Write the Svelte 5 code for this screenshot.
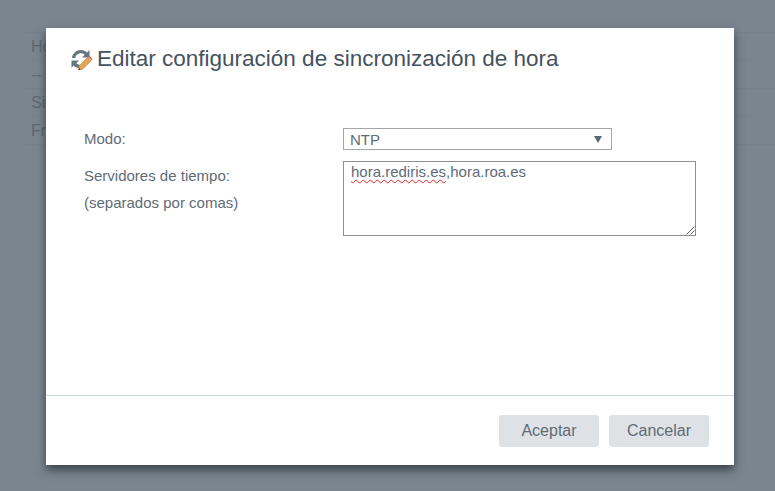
<script>
  const rows = ['Hora', '--', 'Sincronización', 'Fr'];
</script>

<div class="page">
  <div class="table">
    {#each rows as r}
      <div class="row">{r}</div>
    {/each}
  </div>
  <div class="overlay">
    <div class="modal">
      <header class="head">
        <svg class="icon" viewBox="0 0 24 24" width="24" height="24" aria-hidden="true">
          <path d="M3 11C3.600 6.500 7.500 3 12 3c2.400 0 4.500.9 6 2.400L20.500 3v7.500H13l2.700-2.700C14.700 6.900 13.400 6.300 12 6.300 9 6.300 6.700 8.300 6.200 11Z" fill="#66757f"/>
          <path d="M2.500 13.500H10l-2.700 2.700c1 .9 2.200 1.500 3.600 1.500l-.8 3.200c-2.300-.1-4.300-1-5.700-2.400L2.500 21Z" fill="#66757f"/>
          <path d="M9.500 23l1-4.400 8.300-8.300 3.400 3.400-8.300 8.300Z" fill="#e3a455" stroke="#b07a35" stroke-width=".5"/>
          <path d="M19 9.800l1.200-1.200 3.300 3.300-1.100 1.300Z" fill="#ec5c5c"/>
          <path d="M9.500 23l.5-2.200 1.700 1.700Z" fill="#4a3a2a"/>
        </svg>
        <h1>Editar configuración de sincronización de hora</h1>
      </header>
      <div class="body">
        <div class="field">
          <label class="lab" for="modo">Modo:</label>
          <div class="select" id="modo">
            <span>NTP</span>
            <svg class="caret" viewBox="0 0 8 7" width="8" height="7" aria-hidden="true"><path d="M0 0h8L4 7Z" fill="#5a6672"/></svg>
          </div>
        </div>
        <div class="field">
          <label class="lab two" for="srv">Servidores de tiempo:<br />(separados por comas)</label>
          <div class="area" id="srv">
            <span class="txt"><span class="sq">hora.rediris.es</span>,hora.roa.es</span>
            <svg class="grip" viewBox="0 0 10 10" width="10" height="10" aria-hidden="true">
              <path d="M1.500 9.500L9.500 1.500M5.500 9.500L9.500 5.500" stroke="#666" stroke-width="1" fill="none"/>
            </svg>
          </div>
        </div>
      </div>
      <footer class="foot">
        <button type="button">Aceptar</button>
        <button type="button">Cancelar</button>
      </footer>
    </div>
  </div>
</div>

<style>
  :global(body) { margin: 0; background: #7a8590; }
  .page {
    position: relative;
    width: 775px;
    height: 491px;
    overflow: hidden;
    background: #7a8590;
    font-family: "Liberation Sans", Arial, sans-serif;
    padding: 32px 0 0 23px;
    box-sizing: border-box;
  }
  .table { border-top: 1px solid #76818c; }
  .row {
    height: 27px;
    line-height: 27px;
    border-bottom: 1px solid #76818c;
    padding-left: 8px;
    font-size: 16px;
    color: #5d6873;
    background: #7a8590;
  }
  .overlay {
    position: absolute;
    inset: 0;
    padding: 28px 41px 26px 46px;
    box-sizing: border-box;
    display: flex;
  }
  .modal {
    flex: 1;
    min-width: 0;
    background: #fff;
    display: flex;
    flex-direction: column;
    box-shadow: 0 5px 9px rgba(30, 38, 46, .7);
  }
  .head {
    display: flex;
    align-items: center;
    gap: 4px;
    padding: 16px 24px 0 23px;
    height: 30px;
  }
  .icon { flex: none; width: 24px; height: 24px; }
  h1 {
    margin: 0;
    font-size: 22.5px;
    font-weight: 400;
    line-height: 30px;
    color: #46525e;
    white-space: nowrap;
  }
  .body {
    flex: 1;
    padding: 54px 38px 0 38px;
    display: flex;
    flex-direction: column;
    gap: 11px;
  }
  .field { display: flex; align-items: flex-start; }
  .lab {
    width: 259px;
    flex: none;
    font-size: 15px;
    line-height: 22px;
    color: #5f6b77;
  }
  .two { line-height: 27px; margin-top: 1px; }
  .select {
    width: 269px;
    height: 22px;
    box-sizing: border-box;
    border: 1px solid #a6a6a6;
    display: flex;
    align-items: center;
    justify-content: space-between;
    padding: 0 9px 0 6px;
    font-size: 15px;
    color: #5f6b77;
  }
  .area {
    position: relative;
    width: 353px;
    height: 75px;
    box-sizing: border-box;
    border: 1px solid #8f8f8f;
    padding: 1px 7px;
    font-size: 15px;
    line-height: 17px;
    color: #5f6b77;
  }
  .sq { text-decoration: underline wavy #e8212a 1px; text-underline-offset: 2px; }
  .grip { position: absolute; right: 0; bottom: 0; }
  .foot {
    height: 70px;
    flex: none;
    border-top: 1px solid #cfd8dc;
    display: flex;
    align-items: flex-start;
    justify-content: flex-end;
    gap: 10px;
    padding: 19px 25px 0 0;
    box-sizing: border-box;
  }
  button {
    width: 100px;
    height: 32px;
    border: 0;
    border-radius: 3px;
    background: #dee2e6;
    color: #5f6b77;
    font: 16px "Liberation Sans", Arial, sans-serif;
    padding: 0;
    flex: none;
  }
</style>
